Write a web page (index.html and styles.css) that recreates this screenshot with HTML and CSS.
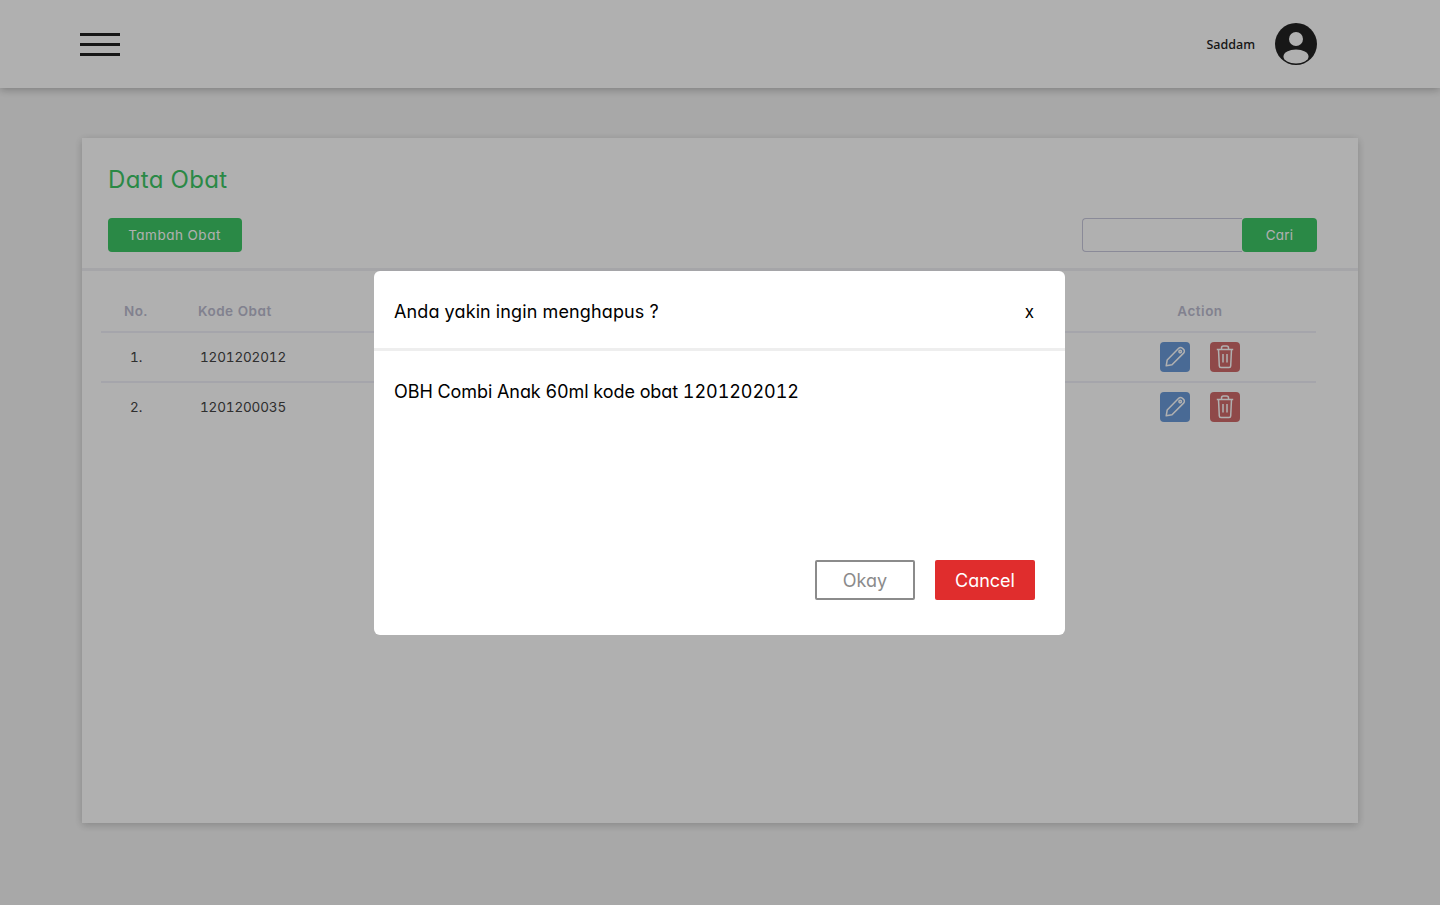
FILE: index.html
```html
<!DOCTYPE html>
<html lang="id">
<head>
  <meta charset="UTF-8" />
  <meta name="viewport" content="width=device-width, initial-scale=1.0" />
  <title>Data Obat</title>
  <link rel="stylesheet" href="styles.css">
</head>
<body>
  <header class="navbar">
    <div class="burger">
      <span></span>
      <span></span>
      <span></span>
    </div>
    <div class="user">
      <span class="user-name">Saddam</span>
      <svg class="avatar" viewBox="0 0 42 42">
        <circle cx="21" cy="21" r="21" fill="#222" />
        <circle cx="21" cy="16" r="7" fill="#fff" />
        <ellipse cx="21" cy="33.5" rx="12.5" ry="7" fill="#fff" />
      </svg>
    </div>
  </header>

  <main class="card">
    <div class="card-head">
      <h1>Data Obat</h1>
      <div class="toolbar">
        <button class="btn-green btn-add">Tambah Obat</button>
        <form class="search">
          <input type="text" />
          <button class="btn-green btn-search" type="button">Cari</button>
        </form>
      </div>
    </div>

    <div class="table">
      <div class="row row-head">
        <div class="col-no">No.</div>
        <div class="col-code">Kode Obat</div>
        <div class="col-action">Action</div>
      </div>
      <div class="row">
        <div class="col-no">1.</div>
        <div class="col-code">1201202012</div>
        <div class="col-action">
          <button class="icon-btn edit">
            <svg viewBox="0 0 24 24"><path d="M3.200 20.800l1-5.800L15.700 3.200a2.600 2.600 0 0 1 3.700 0l1.200 1.200a2.600 2.600 0 0 1 0 3.700L9 19.800l-5.800 1zM16.300 5.600a.9.9 0 1 0 1.800 1.800.9.9 0 1 0-1.800-1.800z" /></svg>
          </button>
          <button class="icon-btn delete">
            <svg viewBox="0 0 24 24"><path d="M3.800 4.500h16.400M8.500 4.500V3a2 2 0 0 1 2-2h3a2 2 0 0 1 2 2v1.500M5.500 4.500l.8 16.500a1.600 1.600 0 0 0 1.600 1.500h8.200a1.600 1.600 0 0 0 1.600-1.500l.8-16.500M10 9v8.500M14 9v8.500" /></svg>
          </button>
        </div>
      </div>
      <div class="row">
        <div class="col-no">2.</div>
        <div class="col-code">1201200035</div>
        <div class="col-action">
          <button class="icon-btn edit">
            <svg viewBox="0 0 24 24"><path d="M3.200 20.800l1-5.800L15.700 3.200a2.600 2.600 0 0 1 3.700 0l1.200 1.200a2.600 2.600 0 0 1 0 3.700L9 19.800l-5.800 1zM16.300 5.600a.9.9 0 1 0 1.800 1.800.9.9 0 1 0-1.800-1.800z" /></svg>
          </button>
          <button class="icon-btn delete">
            <svg viewBox="0 0 24 24"><path d="M3.800 4.500h16.400M8.500 4.500V3a2 2 0 0 1 2-2h3a2 2 0 0 1 2 2v1.500M5.500 4.500l.8 16.500a1.600 1.600 0 0 0 1.600 1.500h8.200a1.600 1.600 0 0 0 1.600-1.500l.8-16.500M10 9v8.500M14 9v8.500" /></svg>
          </button>
        </div>
      </div>
    </div>
  </main>

  <div class="overlay">
    <div class="modal">
      <div class="modal-head">
        <span class="modal-title">Anda yakin ingin menghapus ?</span>
        <span class="modal-close">x</span>
      </div>
      <div class="modal-body">OBH Combi Anak 60ml kode obat 1201202012</div>
      <div class="modal-foot">
        <button class="btn-okay">Okay</button>
        <button class="btn-cancel">Cancel</button>
      </div>
    </div>
  </div>
</body>
</html>
```

FILE: styles.css
```css
* {
  box-sizing: border-box;
}

body {
  margin: 0;
  height: 905px;
  overflow: hidden;
  background: #f4f4f4;
  font-family: Inter, "Noto Sans", sans-serif;
  font-feature-settings: "cv11", "tnum";
}

button {
  font-family: inherit;
  font-feature-settings: inherit;
  cursor: pointer;
}

.navbar {
  height: 88px;
  padding: 0 123px 0 80px;
  background: #fff;
  display: flex;
  justify-content: space-between;
  align-items: center;
  box-shadow: 0 2px 8px rgba(0, 0, 0, 0.25);
}

.burger {
  width: 40px;
  display: flex;
  flex-direction: column;
  gap: 7px;
}

.burger span {
  height: 3px;
  background: #222;
}

.user {
  display: flex;
  align-items: center;
  gap: 20px;
}

.user-name {
  font-family: "Noto Sans", sans-serif;
  font-size: 12.500px;
  font-weight: 500;
  color: #222;
}

.avatar {
  width: 42px;
  height: 42px;
}

.card {
  margin: 50px 82px 0;
  height: 685px;
  background: #fff;
  box-shadow: 0 2px 8px rgba(0, 0, 0, 0.2);
}

.card-head {
  padding: 26px 41px 16px 26px;
  border-bottom: 3px solid #f0f0f4;
}

h1 {
  margin: 0 0 24px;
  padding-top: 1px;
  height: 30px;
  font-size: 24px;
  line-height: 30px;
  font-weight: 400;
  letter-spacing: 0.35px;
  color: #3dc766;
}

.toolbar {
  display: flex;
  justify-content: space-between;
}

.btn-green {
  height: 34px;
  padding: 0;
  border: none;
  border-radius: 4px;
  background: #3dc766;
  color: #fff;
  font-size: 13.500px;
  letter-spacing: 0.5px;
}

.btn-add {
  width: 134px;
  padding-right: 1px;
}

.search {
  display: flex;
}

.search input {
  width: 160px;
  height: 34px;
  border: 1px solid #c8c8dc;
  border-right: none;
  border-radius: 4px 0 0 4px;
  background: #fff;
}

.btn-search {
  width: 75px;
  letter-spacing: 0.2px;
}

.table {
  padding: 0 42px 0 19px;
}

.row {
  height: 50px;
  display: flex;
  align-items: center;
  border-bottom: 2px solid #f0f0f8;
  font-size: 13.500px;
  color: #444;
}

.row:last-child {
  border-bottom-color: transparent;
}

.row-head {
  height: 62px;
  padding-top: 20px;
  font-weight: 600;
  letter-spacing: 0.5px;
  color: #bcbccf;
}

.col-no {
  width: 97px;
  padding-left: 29px;
}

.col-code {
  flex: 1;
  padding-left: 2px;
  letter-spacing: -0.15px;
}

.row-head .col-no {
  padding-left: 23px;
}

.row-head .col-code {
  padding-left: 0;
  letter-spacing: 0.5px;
}

.col-action {
  width: 232px;
  display: flex;
  justify-content: center;
  gap: 20px;
}

.icon-btn {
  width: 30px;
  height: 30px;
  padding: 3px;
  border: none;
  border-radius: 4px;
  display: flex;
}

.icon-btn svg {
  fill: none;
  stroke: #fff;
  stroke-width: 1.500;
  stroke-linejoin: round;
}

.edit {
  background: #6b9ad8;
}

.delete {
  background: #d06b6b;
}

.overlay {
  position: fixed;
  inset: 0;
  background: rgba(0, 0, 0, 0.31);
  display: flex;
  justify-content: center;
  align-items: center;
}

.modal {
  width: 691px;
  height: 364px;
  margin-left: -1px;
  background: #fff;
  border-radius: 6px;
  color: #000;
  display: flex;
  flex-direction: column;
}

.modal-head {
  height: 80px;
  padding: 4px 31px 0 20px;
  border-bottom: 3px solid #eee;
  display: flex;
  justify-content: space-between;
  align-items: center;
  font-size: 18px;
}

.modal-title {
  letter-spacing: 0.13px;
}

.modal-close {
  padding-top: 2px;
  font-size: 17px;
}

.modal-body {
  flex: 1;
  padding: 30px 20px 0;
  font-size: 18px;
  line-height: 22px;
  letter-spacing: -0.07px;
}

.modal-foot {
  padding: 0 30px 35px;
  display: flex;
  justify-content: flex-end;
  gap: 20px;
}

.btn-okay,
.btn-cancel {
  width: 100px;
  height: 40px;
  padding: 2px 0 0;
  border-radius: 2px;
  font-size: 18px;
}

.btn-okay {
  border: 2px solid #8b8b8b;
  background: #fff;
  color: #8b8b8b;
}

.btn-cancel {
  border: none;
  background: #e02d2d;
  color: #fff;
}
```
